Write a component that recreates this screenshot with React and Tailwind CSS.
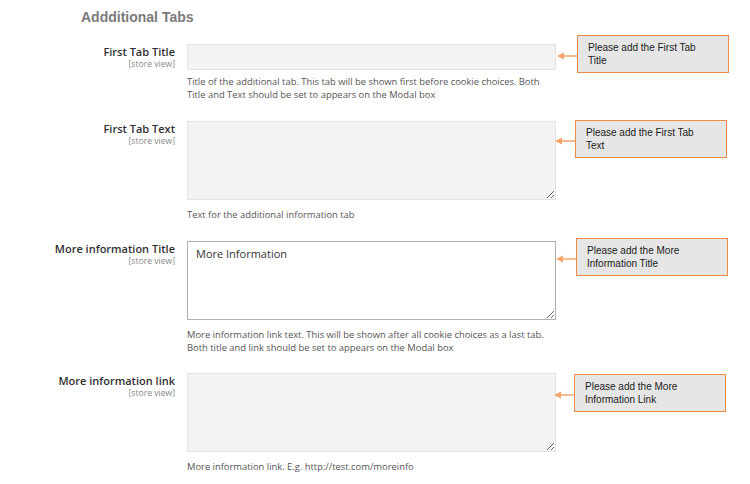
import React from 'react';

const rows = [
  {
    label: 'First Tab Title',
    kind: 'input',
    help: ['Title of the additional tab. This tab will be shown first before cookie choices. Both', 'Title and Text should be set to appears on the Modal box'],
    note: ['Please add the First Tab', 'Title'],
    noteClass: 'mt-[-9px] ml-0',
    gap: 'mb-[20px]',
  },
  {
    label: 'First Tab Text',
    kind: 'textarea',
    help: ['Text for the additional information tab'],
    note: ['Please add the First Tab', 'Text'],
    noteClass: 'mt-[-1px] ml-[-2px]',
    gap: 'mb-[20px]',
  },
  {
    label: 'More information Title',
    kind: 'textarea',
    value: 'More Information',
    active: true,
    help: ['More information link text. This will be shown after all cookie choices as a last tab.', 'Both title and link should be set to appears on the Modal box'],
    note: ['Please add the More', 'Information Title'],
    noteClass: 'mt-[-3px] ml-[-1px]',
    gap: 'mb-[19px]',
  },
  {
    label: 'More information link',
    kind: 'textarea',
    help: ['More information link. E.g. http://test.com/moreinfo'],
    note: ['Please add the More', 'Information Link'],
    noteClass: 'mt-[1px] ml-[-3px]',
    gap: '',
  },
];

const Callout = ({ lines, className }) => (
  <div className={`flex items-center ${className}`}>
    {/* arrow pointing back at the field */}
    <svg width="21" height="8" viewBox="0 0 21 8" className="shrink-0 mt-[3px]">
      <line x1="5" y1="4" x2="21" y2="4" stroke="#f6a56a" strokeWidth="1.5" />
      <polygon points="1,4 8,0.5 8,7.5" fill="#f6a56a" />
    </svg>
    <div className="w-[152px] h-[38px] border border-[#f08a42] bg-[#e6e6e6] pl-[10px] pt-[5px] text-[10px] leading-[13px] text-[#1a1a1a] font-['Liberation_Sans',Arial,sans-serif]">
      {lines.map((l, i) => (
        <div key={i} className="whitespace-nowrap">{l}</div>
      ))}
    </div>
  </div>
);

const Row = ({ row }) => (
  <div className={`flex items-start ${row.gap}`}>
    <div className="w-[175px] shrink-0 text-right">
      <div className="text-[11px] leading-[16px] font-semibold text-[#303030]">{row.label}</div>
      <div className="text-[8.6px] leading-[9px] text-[#8a8a8a]">[store view]</div>
    </div>
    <div className="w-[369px] ml-[12px] shrink-0">
      {row.kind === 'input' ? (
        <div className="h-[26px] border border-[#e3e3e3] bg-[#f3f3f3]" />
      ) : (
        <textarea
          readOnly
          defaultValue={row.value || ''}
          className={`block w-[369px] h-[79px] px-[8px] py-[4px] text-[11px] leading-[16px] text-[#333] resize-y outline-none border ${
            row.active ? 'bg-white border-[#b0b0b0]' : 'bg-[#f3f3f3] border-[#e3e3e3]'
          }`}
        />
      )}
      <div className={`${row.kind === 'input' ? 'mt-[5px]' : 'mt-[8px]'} text-[9.4px] leading-[13px] text-[#555]`}>
        {row.help.map((h, i) => (
          <div key={i} className="whitespace-nowrap">{h}</div>
        ))}
      </div>
    </div>
    <Callout lines={row.note} className={row.noteClass} />
  </div>
);

export default function App() {
  return (
    <div className="w-[750px] h-[484px] bg-white overflow-hidden font-['Open_Sans',sans-serif]">
      <div className="pl-[81px] pt-[8px] h-[44px]">
        <h2 className="text-[14px] leading-[18px] font-bold text-[#7a7a7a] font-['Liberation_Sans',Arial,sans-serif]">
          Addditional Tabs
        </h2>
      </div>
      {rows.map((r) => (
        <Row key={r.label} row={r} />
      ))}
    </div>
  );
}
